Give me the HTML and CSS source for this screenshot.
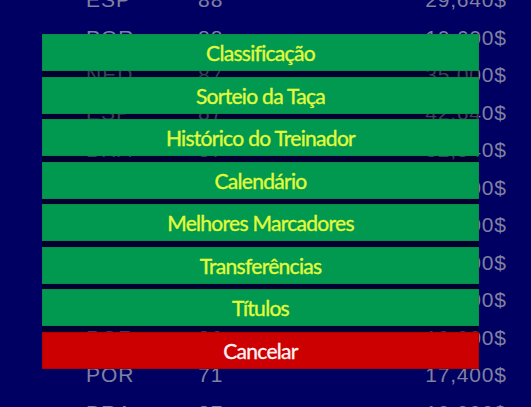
FILE: index.html
```html
<!DOCTYPE html>
<html lang="pt">
<head>
<meta charset="utf-8">
<title>Menu</title>
<link rel="stylesheet" href="styles.css">
</head>
<body>
<div class="screen">
  <div class="table">
    <div class="row"><span class="c">ESP</span><span class="n">88</span><span class="v">29,640$</span></div>
    <div class="row"><span class="c">POR</span><span class="n">88</span><span class="v">10,600$</span></div>
    <div class="row"><span class="c">NED</span><span class="n">87</span><span class="v">35,000$</span></div>
    <div class="row"><span class="c">ESP</span><span class="n">87</span><span class="v">42,640$</span></div>
    <div class="row"><span class="c">BRA</span><span class="n">87</span><span class="v">32,540$</span></div>
    <div class="row"><span class="c">ARG</span><span class="n">86</span><span class="v">25,000$</span></div>
    <div class="row"><span class="c">FRA</span><span class="n">86</span><span class="v">21,300$</span></div>
    <div class="row"><span class="c">ITA</span><span class="n">85</span><span class="v">18,900$</span></div>
    <div class="row"><span class="c">ENG</span><span class="n">85</span><span class="v">15,200$</span></div>
    <div class="row"><span class="c">POR</span><span class="n">86</span><span class="v">10,000$</span></div>
    <div class="row"><span class="c">POR</span><span class="n">71</span><span class="v">17,400$</span></div>
    <div class="row"><span class="c">BRA</span><span class="n">87</span><span class="v">10,000$</span></div>
  </div>
  <div class="menu">
    <div class="btn">Classificação</div>
    <div class="btn">Sorteio da Taça</div>
    <div class="btn">Histórico do Treinador</div>
    <div class="btn">Calendário</div>
    <div class="btn">Melhores Marcadores</div>
    <div class="btn">Transferências</div>
    <div class="btn">Títulos</div>
    <div class="btn cancel">Cancelar</div>
  </div>
</div>
</body>
</html>
```

FILE: styles.css
```css
html, body {
  margin: 0;
  padding: 0;
  background: #000062;
  width: 531px;
  height: 407px;
  overflow: hidden;
}

.screen {
  position: relative;
  width: 531px;
  height: 407px;
  overflow: hidden;
}

.table {
  margin-top: -19px;
  font-family: "Liberation Sans", Arial, sans-serif;
  font-size: 21px;
  color: #8080a0;
}

.row {
  display: grid;
  grid-template-columns: 112px 1fr auto;
  height: 37.55px;
  line-height: 37.55px;
  padding-left: 86px;
  padding-right: 25px;
  letter-spacing: 1px;
}

.v {
  text-align: right;
  letter-spacing: 0.8px;
  margin-right: -0.8px;
}

.menu {
  position: absolute;
  top: 34px;
  left: 42px;
  width: 437px;
  display: flex;
  flex-direction: column;
  gap: 5.5px;
  background: rgba(0, 0, 0, 0.5);
}

.btn {
  height: 37px;
  box-sizing: border-box;
  display: flex;
  align-items: center;
  justify-content: center;
  background: #00994f;
  border: 1px solid #0b8a4a;
  color: #e2fb3c;
  font-family: Lato, "Open Sans", sans-serif;
  font-size: 21px;
  font-weight: 400;
  letter-spacing: -0.7px;
  -webkit-text-stroke: 0.35px currentColor;
}

.btn.cancel {
  background: #cc0000;
  border-color: #b00000;
  color: #fdf2f2;
}
```
